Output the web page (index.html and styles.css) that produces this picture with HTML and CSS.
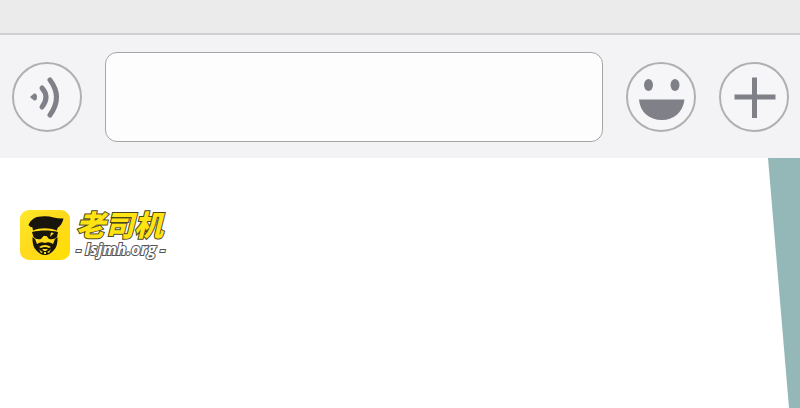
FILE: index.html
```html
<!DOCTYPE html>
<html lang="zh-CN">

<head>
    <meta charset="UTF-8">
    <meta name="viewport" content="width=device-width, initial-scale=1.0">
    <title>老司机</title>
    <link rel="stylesheet" href="styles.css">
</head>

<body>

    <div class="chat-end"></div>

    <!-- Message bar -->
    <form class="message-bar">
        <button type="button" class="icon-button" aria-label="语音">
            <svg viewBox="0 0 70 70">
                <path class="fill" d="M18 35 L22 31.500 Q25 31 25 35 Q25 39 22 38.500 Z" />
                <path class="wave" d="M30 26 Q38 35 30 45" />
                <path class="wave" d="M38 18 Q51 35 38 53" />
            </svg>
        </button>
        <input type="text" class="message-input" aria-label="消息">
        <button type="button" class="icon-button" aria-label="表情">
            <svg viewBox="0 0 70 70">
                <ellipse class="fill" cx="22.500" cy="23" rx="4.5" ry="6" />
                <ellipse class="fill" cx="49" cy="23" rx="4.5" ry="6" />
                <path class="fill" d="M13 37.500 H58.500 C57 50 48 58 36 58 C23 58 14 50 13 37.500 Z" />
            </svg>
        </button>
        <button type="button" class="icon-button" aria-label="更多">
            <svg viewBox="0 0 70 70">
                <path class="plus" d="M35.500 15.500 V56 M15.500 35 H56.500" />
            </svg>
        </button>
    </form>

    <main class="content">
        <div class="brand">
            <svg class="brand-logo" viewBox="0 0 50 50">
                <defs>
                    <linearGradient id="logoYellow" x1="0" y1="0" x2="1" y2="1">
                        <stop offset="0" stop-color="#ffe82a" />
                        <stop offset="0.5" stop-color="#ffd91c" />
                        <stop offset="1" stop-color="#ffe000" />
                    </linearGradient>
                </defs>
                <rect width="50" height="50" rx="9" fill="url(#logoYellow)" />
                <g fill="#17150c">
                    <!-- cap -->
                    <path d="M8.500 15 C11 9 16 6 22 6.500 C29 5 36 9 43.500 8.500 C42.500 13 40.500 16 37.500 18 L37 20.500 C29 17.500 20 17.500 13 20.500 L12.500 17.500 Q10 17 8.500 15 Z" />
                    <!-- glasses -->
                    <path d="M12 22 C20 20 30 20 38 22 L37 27 Q34 30 29 29 L26.500 26 H23.500 L21 29 Q16 30 13.500 27 Z" />
                    <!-- beard -->
                    <path d="M12.500 27 L15 29 L17 34 Q21 31 25 33 Q29 31 33 34 L35 29 L37.500 27 Q38 36 34 40 Q30 45 25 45 Q20 45 16 40 Q12 36 12.500 27 Z" />
                </g>
                <g fill="#ffdf20">
                    <path d="M31 22.500 L34 23 L30 27 Z" />
                    <path d="M19 37 Q25 33 31 37 L29 38 Q25 36 21 38 Z" />
                    <path d="M22 39 H28 L26 41 H24 Z" />
                    <path d="M19 39 L21 43 L23 42 L21 41 Z M31 39 L29 43 L27 42 L29 41 Z M24 42 H26 V44 H24 Z" />
                </g>
            </svg>
            <div class="brand-text">
                <span class="brand-name">老司机</span>
                <span class="brand-site">- lsjmh.org -</span>
            </div>
        </div>
        <div class="slant"></div>
    </main>

</body>

</html>
```

FILE: styles.css
```css
* {
    box-sizing: border-box;
}

body {
    margin: 0;
    min-height: 100vh;
    display: flex;
    flex-direction: column;
    background-color: #fff;
    font-family: "Open Sans", "Noto Sans CJK SC", sans-serif;
}

.chat-end {
    height: 35px;
    background-color: #ebebeb;
    border-bottom: 2px solid #cfcfd1;
}

/* Message bar */
.message-bar {
    display: flex;
    align-items: center;
    gap: 23px;
    padding: 17px 11px 16px 12px;
    background-color: #f3f3f5;
}

.icon-button {
    flex: none;
    width: 70px;
    height: 70px;
    padding: 0;
    border: 2px solid #b0b0b3;
    border-radius: 50%;
    background-color: #f6f6f8;
    cursor: pointer;
}

.icon-button svg {
    display: block;
    width: 70px;
    height: 70px;
    margin: -2px;
}

.fill {
    fill: #808188;
}

.wave,
.plus {
    fill: none;
    stroke: #808188;
    stroke-width: 5;
    stroke-linecap: round;
}

.plus {
    stroke-linecap: butt;
}

.message-input {
    flex: 1;
    min-width: 0;
    height: 90px;
    padding: 0 20px;
    border: 1px solid #a6a6a9;
    border-radius: 12px;
    background-color: #fdfdfd;
    font-size: 32px;
}

/* Content */
.content {
    flex: 1;
    display: flex;
    justify-content: space-between;
}

.brand {
    display: flex;
    align-items: flex-start;
    gap: 6px;
    padding: 52px 20px;
}

.brand-logo {
    width: 50px;
    height: 50px;
}

.brand-text {
    display: flex;
    flex-direction: column;
    font-style: italic;
    white-space: nowrap;
    paint-order: stroke fill;
}

.brand-name {
    font-family: "Noto Sans CJK SC", sans-serif;
    font-size: 29px;
    font-weight: 900;
    line-height: 26px;
    color: #ffe312;
    -webkit-text-stroke: 2px #4c4620;
}

.brand-site {
    font-size: 16px;
    font-weight: 700;
    line-height: 26px;
    color: #fff;
    -webkit-text-stroke: 2px #555;
}

.slant {
    width: 32px;
    background-color: #93b8b7;
    clip-path: polygon(0 0, 100% 0, 100% 100%, 21px 100%);
}
```
